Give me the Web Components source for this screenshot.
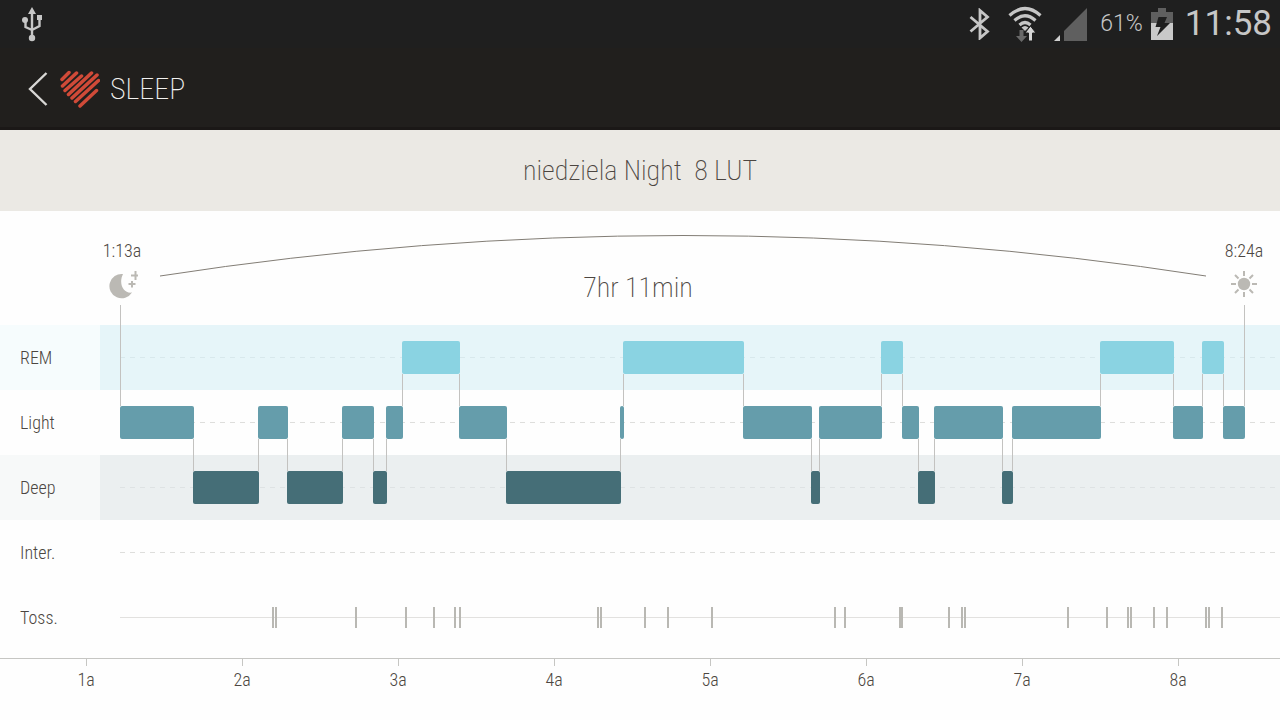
<!DOCTYPE html>
<html lang="pl">
<head>
<meta charset="utf-8">
<meta name="viewport" content="width=device-width, initial-scale=1">
<title>Sleep</title>
<style>
  body {
    margin: 0;
    background: #fefefe;
    color: #4c4641;
    font-family: 'Roboto Condensed', 'Liberation Sans', sans-serif;
    font-size: 18px;
    font-weight: 300;
    line-height: 24px;
  }
</style>
</head>
<body>
<sleep-screen></sleep-screen>

<script>
// Boundaries of the sleep stages, on a 1280 unit wide time scale (156 units = 1 hour)
const NIGHT_START = 120;
const SCALE = 1280;
const STAGES = [
  ['light', 193], ['deep', 258], ['light', 287], ['deep', 342], ['light', 373],
  ['deep', 386], ['light', 402], ['rem', 459], ['light', 506], ['deep', 620],
  ['light', 623], ['rem', 743], ['light', 811], ['deep', 819], ['light', 881],
  ['rem', 902], ['light', 918], ['deep', 934], ['light', 1002], ['deep', 1012],
  ['light', 1100], ['rem', 1173], ['light', 1202], ['rem', 1223], ['light', 1244]
];
const TOSSES = [
  272, 275, 355, 405, 433, 454, 459, 597, 600, 644, 667, 711, 834, 844, 899, 901,
  948, 961, 964, 1067, 1106, 1127, 1130, 1153, 1166, 1205, 1208, 1221
];
const HOURS = ['1a', '2a', '3a', '4a', '5a', '6a', '7a', '8a'];

class StatusBar extends HTMLElement {
  constructor() {
    super();
    this.attachShadow({ mode: 'open' });
  }

  connectedCallback() {
    this.shadowRoot.innerHTML = `
      <style>
        :host {
          display: flex;
          align-items: center;
          height: 48px;
          padding: 0 8px 0 20px;
          background: #1f1f1f;
          color: #c6c6c6;
          font-family: Roboto, 'Liberation Sans', sans-serif;
        }
        svg { display: block; flex: none; }
        .usb { margin-right: auto; }
        .signals { display: flex; align-items: center; gap: 16px; }
        .network { display: flex; align-items: center; gap: 10px; }
        .power { display: flex; align-items: center; gap: 8px; padding: 0 12px 0 13px; }
        .percent { font-size: 23px; font-weight: 300; }
        time { font-size: 35px; font-weight: 400; line-height: 48px; }
      </style>
      <svg class="usb" width="24" height="36" viewBox="0 0 24 36" fill="none" stroke="#c6c6c6" stroke-width="2.400" aria-hidden="true">
        <path d="M12 6v24M5.500 14v7l6.500 3 7.500-4v-7"/>
        <path fill="#c6c6c6" stroke="none" d="M12 1l4 7H8zM17 9h5v5h-5z"/>
        <circle cx="5" cy="14" r="3" fill="#c6c6c6" stroke="none"/>
        <circle cx="12" cy="32" r="3.200" fill="#c6c6c6" stroke="none"/>
      </svg>
      <div class="signals">
        <svg width="22" height="32" viewBox="0 0 22 32" fill="none" stroke="#c6c6c6" stroke-width="2.800" aria-hidden="true">
          <path d="M1.500 9l17 14.500-7.500 6.500V2.500l7.500 6.500-17 14.500"/>
        </svg>
        <div class="network">
          <svg width="36" height="36" viewBox="0 0 36 36" aria-hidden="true">
            <g fill="none" stroke="#c6c6c6" stroke-width="3.200">
              <path d="M2.500 9.500Q18-4.500 33.500 9.500"/>
              <path d="M7.500 14.500Q18 5 28.500 14.500"/>
              <path d="M12.500 19Q18 14 23.500 19"/>
            </g>
            <path fill="#c6c6c6" d="M14.500 21.500q3.500-3 7 0L18 25z"/>
            <path fill="#696969" d="M12.500 24h4v6H20l-5.500 6-5.500-6h3.500z"/>
            <path fill="#d6d6d6" stroke="#1f1f1f" d="M21.500 35v-8H18l5.500-7 5.500 7h-3.500v8z"/>
          </svg>
          <svg width="34" height="34" viewBox="0 0 34 34" aria-hidden="true">
            <path fill="#5f5f5f" d="M34 1v33H11V24z"/>
            <path fill="#d0d0d0" d="M7 28v6H1z"/>
          </svg>
        </div>
      </div>
      <div class="power">
        <span class="percent">61%</span>
        <svg width="22" height="32" viewBox="0 0 22 32" aria-hidden="true">
          <path fill="#5f5f5f" d="M7 0h8v4h7v12H0V4h7z"/>
          <path fill="#c9c9c9" d="M0 15h22v17H0z"/>
          <path fill="#1f1f1f" d="M7.500 9H16l-2.500 6H19L6 28l3.500-9H4.500z"/>
        </svg>
      </div>
      <time>11:58</time>
    `;
  }
}

class AppBar extends HTMLElement {
  constructor() {
    super();
    this.attachShadow({ mode: 'open' });
  }

  connectedCallback() {
    this.shadowRoot.innerHTML = `
      <style>
        :host {
          display: block;
          box-sizing: border-box;
          height: 82px;
          background: #211f1d;
          border-bottom: 3px solid #1b1817;
          color: #f2f1ef;
        }
        button {
          display: flex;
          align-items: center;
          height: 100%;
          padding: 3px 24px 0;
          border: 0;
          background: none;
          color: inherit;
          font: inherit;
          cursor: pointer;
        }
        .heart { margin: 0 10px; }
        h1 { margin: 0; font-size: 30px; font-weight: 200; line-height: 40px; }
      </style>
      <button type="button" aria-label="Back">
        <svg width="26" height="36" viewBox="0 0 26 36" fill="none" stroke="#d8d7d5" stroke-width="2.400" aria-hidden="true">
          <path d="M22.500 2L6 18l16.500 16"/>
        </svg>
        <svg class="heart" width="40" height="40" viewBox="0 0 40 40" fill="none" stroke="#d04a38" stroke-width="3.500" stroke-linecap="round" aria-hidden="true">
          <path d="M2 10.500L9 3.500M2.500 17L16.500 4M5 21.500L21.500 7M8.500 25.500L31.500 4M12 29L37 6M15.500 32.500L38.500 11.500M20 37L36.500 21.500"/>
        </svg>
        <h1><slot></slot></h1>
      </button>
    `;
  }
}

class NightSummary extends HTMLElement {
  constructor() {
    super();
    this.attachShadow({ mode: 'open' });
  }

  connectedCallback() {
    this.shadowRoot.innerHTML = `
      <style>
        :host {
          display: grid;
          grid-template-columns: 160px 1fr 74px;
          height: 94px;
        }
        .mark {
          display: flex;
          flex-direction: column;
          align-items: center;
          gap: 7px;
          padding-top: 28px;
        }
        .start { padding-left: 84px; }
        .end { padding-left: 2px; }
        .span { display: grid; grid-template-rows: 56px 1fr; }
        .arc { width: 100%; height: 48px; margin-top: 20px; display: block; }
        .total {
          justify-self: center;
          padding-right: 90px;
          font-size: 28px;
          font-weight: 200;
          line-height: 42px;
        }
      </style>
      <div class="mark start">
        <slot name="start"></slot>
        <svg width="32" height="30" viewBox="0 0 32 30" aria-hidden="true">
          <path fill="#bbb9b4" d="M17 4A12.200 12.200 0 1 0 26 22.500C18 24 12 14 17 4z"/>
          <path stroke="#bbb9b4" stroke-width="2" d="M29.500 1v9M25 5.500h7M26 11v6.500M22.500 14h7"/>
        </svg>
      </div>
      <div class="span">
        <svg class="arc" viewBox="0 0 1046 48" preserveAspectRatio="none" fill="none" stroke="#827d75" aria-hidden="true">
          <path vector-effect="non-scaling-stroke" d="M0 45Q523-36 1046 45"/>
        </svg>
        <div class="total"><slot name="total"></slot></div>
      </div>
      <div class="mark end">
        <slot name="end"></slot>
        <svg width="28" height="28" viewBox="0 0 28 28" aria-hidden="true">
          <circle cx="14" cy="14" r="6.200" fill="#bbb9b4"/>
          <path stroke="#bbb9b4" stroke-width="2" d="M14 1v5M14 22v5M1 14h5M22 14h5M5 5l3.500 3.500M19.500 19.500L23 23M5 23l3.500-3.500M19.500 8.500L23 5"/>
        </svg>
      </div>
    `;
  }
}

class ChartLane extends HTMLElement {
  constructor() {
    super();
    this.attachShadow({ mode: 'open' });
  }

  connectedCallback() {
    this.shadowRoot.innerHTML = `
      <style>
        :host {
          display: grid;
          grid-template-columns: 100px 1fr;
          height: 65px;
          --dash: #dededc;
        }
        :host([tone=rem]) { --label-bg: #f6fcfd; --lane-bg: #e6f5f9; --dash: #d8e8ec; }
        :host([tone=deep]) { --label-bg: #f7f9f9; --lane-bg: #ebeff0; --dash: #dee2e3; }
        .label {
          display: flex;
          align-items: center;
          padding-left: 20px;
          background: var(--label-bg);
        }
        .track {
          display: flex;
          align-items: center;
          padding-left: 20px;
          background: var(--lane-bg);
        }
        .line {
          flex: 1;
          height: 1px;
          background: repeating-linear-gradient(90deg, var(--dash) 0 5px, transparent 5px 10px);
        }
        :host([solid]) .line { background: #e2e1df; }
      </style>
      <div class="label"><slot></slot></div>
      <div class="track"><div class="line"></div></div>
    `;
  }
}

class NightStages extends HTMLElement {
  constructor() {
    super();
    this.attachShadow({ mode: 'open' });
  }

  connectedCallback() {
    const rows = { rem: 2, light: 3, deep: 4 };
    const columns = [NIGHT_START];
    let from = NIGHT_START;
    let cells = '';

    STAGES.forEach(([stage, to], i) => {
      columns.push(to - from);
      from = to;
      cells += `<i class="bar ${stage}" style="grid-area: ${rows[stage]} / ${i + 2}"></i>`;

      // Connector to the stage before
      if (i > 0) {
        const pair = [rows[stage], rows[STAGES[i - 1][0]]].sort();
        cells += `<i class="link" style="grid-area: ${pair[0]} / ${i + 2} / ${pair[1] + 1}"></i>`;
      }
    });
    columns.push(SCALE - from);

    this.shadowRoot.innerHTML = `
      <style>
        :host {
          display: grid;
          grid-template-columns: ${columns.map(c => `minmax(0, ${c}fr)`).join(' ')};
          grid-template-rows: 20px 65px 65px 65px;
        }
        .bar {
          z-index: 1;
          margin: 16px -1px 16px 0;
          border-radius: 2px;
        }
        .rem { background: #8ad3e2; }
        .light { background: #659dab; }
        .deep { background: #456e77; }
        .link, .edge { width: 1px; background: #c3c2c0; }
        .link { margin: 49px 0; }
        .edge { margin-bottom: 49px; }
      </style>
      <i class="edge" style="grid-area: 1 / 2 / 4"></i>
      <i class="edge" style="grid-area: 1 / ${STAGES.length + 2} / 4"></i>
      ${cells}
    `;
  }
}

class TossMarks extends HTMLElement {
  constructor() {
    super();
    this.attachShadow({ mode: 'open' });
  }

  connectedCallback() {
    const marks = TOSSES
      .map(x => `<rect x="${x / SCALE * 100}%" width="2" height="21"/>`)
      .join('');

    this.shadowRoot.innerHTML = `
      <style>
        :host { display: block; }
        svg { display: block; width: 100%; height: 21px; fill: #b9b8b3; }
      </style>
      <svg aria-hidden="true">${marks}</svg>
    `;
  }
}

class HourAxis extends HTMLElement {
  constructor() {
    super();
    this.attachShadow({ mode: 'open' });
  }

  connectedCallback() {
    this.shadowRoot.innerHTML = `
      <style>
        :host {
          display: grid;
          grid-template-columns: 8fr repeat(8, 156fr) 24fr;
          border-top: 1px solid #c6c6c3;
        }
        .hour {
          display: flex;
          flex-direction: column;
          align-items: center;
          gap: 2px;
        }
        .hour:first-of-type { grid-column: 2; }
        .hour::before {
          content: '';
          width: 1px;
          height: 7px;
          background: #c6c6c3;
        }
      </style>
      ${HOURS.map(h => `<div class="hour">${h}</div>`).join('')}
    `;
  }
}

class SleepScreen extends HTMLElement {
  constructor() {
    super();
    this.attachShadow({ mode: 'open' });
  }

  connectedCallback() {
    this.shadowRoot.innerHTML = `
      <style>
        :host { display: block; }
        h2 {
          margin: 0;
          padding: 21px 0 20px;
          background: #ebe9e4;
          font-size: 28px;
          font-weight: 200;
          line-height: 40px;
          text-align: center;
          white-space: pre;
        }
        /* lanes, stages and toss marks share the same cell */
        .chart {
          display: grid;
          grid-template-columns: minmax(0, 1fr);
          padding-bottom: 8px;
        }
        .chart > * { grid-area: 1 / 1; }
        .lanes { padding-top: 20px; }
        night-stages { align-self: start; }
        toss-marks { align-self: end; padding-bottom: 22px; }
      </style>
      <status-bar></status-bar>
      <app-bar>SLEEP</app-bar>
      <main>
        <h2>niedziela Night  8 LUT</h2>
        <night-summary>
          <span slot="start">1:13a</span>
          <span slot="total">7hr 11min</span>
          <span slot="end">8:24a</span>
        </night-summary>
        <div class="chart">
          <div class="lanes">
            <chart-lane tone="rem">REM</chart-lane>
            <chart-lane>Light</chart-lane>
            <chart-lane tone="deep">Deep</chart-lane>
            <chart-lane>Inter.</chart-lane>
            <chart-lane solid>Toss.</chart-lane>
          </div>
          <night-stages></night-stages>
          <toss-marks></toss-marks>
        </div>
        <hour-axis></hour-axis>
      </main>
    `;
  }
}

customElements.define('status-bar', StatusBar);
customElements.define('app-bar', AppBar);
customElements.define('night-summary', NightSummary);
customElements.define('chart-lane', ChartLane);
customElements.define('night-stages', NightStages);
customElements.define('toss-marks', TossMarks);
customElements.define('hour-axis', HourAxis);
customElements.define('sleep-screen', SleepScreen);
</script>
</body>
</html>
